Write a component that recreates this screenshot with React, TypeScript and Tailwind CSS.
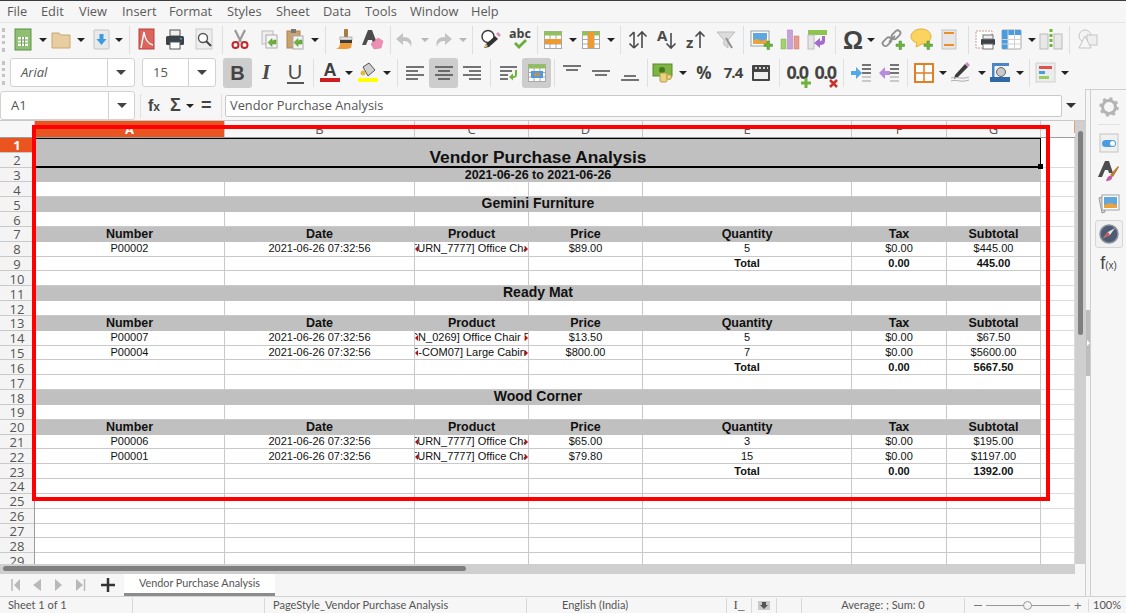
import type { ReactNode } from "react";

const UI = "font-['Open_Sans',sans-serif]";
const SHEET = "font-['Liberation_Sans',Arial,sans-serif]";

// ========================================
// Toolbar pieces
// ========================================

function B({ ml, children }: { ml: string; children: ReactNode }) {
  return <div className={`${ml} flex h-5 w-5 flex-none items-center justify-center`}>{children}</div>;
}

function Drop({ ml, light }: { ml: string; light?: boolean }) {
  return (
    <div className={`${ml} flex w-2 flex-none justify-center`}>
      <div className={`h-0 w-0 border-x-[4px] border-t-[4px] border-x-transparent ${light ? "border-t-[#b5b5b5]" : "border-t-[#222222]"}`} />
    </div>
  );
}

function Sep({ ml }: { ml: string }) {
  return <div className={`${ml} h-7 w-px flex-none bg-[#dfdfdf]`} />;
}

function Grip() {
  return <div className="ml-[2px] h-[24px] w-[3px] flex-none border-l-[3px] border-dotted border-[#c4c4c4]" />;
}

function Ico({ children }: { children: ReactNode }) {
  return (
    <svg width="20" height="20" viewBox="0 0 20 20" className="flex-none overflow-visible">
      {children}
    </svg>
  );
}

const Plus = () => <path d="M13 14h3v-3h2.500v3h3v2.500h-3v3H16v-3h-3z" fill="#6db33f" stroke="#4f8f2d" strokeWidth=".5" />;
const GreenArrow = () => <path d="M17 10v4h-4v2.500l-4-4 4-4V11h1.500V10z" fill="#6fb33c" stroke="#4c8a28" strokeWidth=".5" />;

const TableGrid = ({ head = "#8cc44f" }: { head?: string }) => (
  <>
    <rect x="1.500" y="1.500" width="17" height="17" fill="#fff" stroke="#a8a8a8" />
    <rect x="1.500" y="1.500" width="17" height="4" fill={head} />
    <path d="M1.500 9.500h17M1.500 14h17M7 1.500v17M13 1.500v17" stroke="#a8a8a8" fill="none" />
  </>
);

const Lines = ({ d }: { d: string }) => <path d={d} stroke="#4a4a4a" strokeWidth="1.600" fill="none" />;

const icons: Record<string, ReactNode> = {
  newSheet: (
    <>
      <rect x="2" y="-1" width="16" height="21" fill="#8fbf73" stroke="#5d9148" />
      <rect x="5" y="7" width="10" height="9" fill="#fff" />
      <path d="M5 10h10M5 13h10M8.500 7v9M11.500 7v9" stroke="#6ea653" fill="none" />
    </>
  ),
  folder: <path d="M1 3h7l2 2h9v13H1z" fill="#e7cd9f" stroke="#c8a873" />,
  save: (
    <>
      <rect x="3" y="0" width="15" height="19" rx="1" fill="#e9e9e9" stroke="#c3c3c3" />
      <path d="M8.500 4h4v5h3l-5 6-5-6h3z" fill="#3d9be0" />
    </>
  ),
  pdf: (
    <>
      <rect x="3" y="-1" width="15" height="20" fill="#d9655d" stroke="#b8433d" />
      <path d="M5 18 8 2c1 7 4 12 9 13" stroke="#fff" strokeWidth="1.400" fill="none" />
    </>
  ),
  print: (
    <>
      <rect x="5" y="0" width="10" height="6" fill="#eee" stroke="#555" />
      <rect x="1" y="6" width="18" height="9" rx="1.500" fill="#3b4248" />
      <rect x="5" y="12" width="10" height="7" fill="#fff" stroke="#555" />
      <rect x="15" y="8" width="2" height="1.500" fill="#35a5e0" />
    </>
  ),
  preview: (
    <>
      <rect x="2" y="-1" width="16" height="20" fill="#eeeeee" stroke="#c9c9c9" />
      <circle cx="9" cy="8" r="4.500" fill="#fff" stroke="#555" strokeWidth="1.400" />
      <path d="m12 11 5 5" stroke="#444" strokeWidth="2" />
    </>
  ),
  cut: (
    <>
      <path d="M5 0l6 12M15 0 9 12" stroke="#9a9a9a" strokeWidth="2.200" />
      <circle cx="5.500" cy="15" r="3" fill="none" stroke="#c1272d" strokeWidth="2" />
      <circle cx="14.500" cy="15" r="3" fill="none" stroke="#c1272d" strokeWidth="2" />
    </>
  ),
  copy: (
    <>
      <rect x="3" y="1" width="11" height="13" fill="#eee" stroke="#bbb" />
      <rect x="7" y="5" width="11" height="13" fill="#f6f6f6" stroke="#aaa" />
      <GreenArrow />
    </>
  ),
  paste: (
    <>
      <rect x="2" y="1" width="13" height="17" fill="#c8a36f" stroke="#a98450" />
      <rect x="6" y="-1" width="5" height="4" fill="#777" />
      <rect x="8" y="6" width="10" height="13" fill="#f4f4f4" stroke="#aaa" />
      <GreenArrow />
    </>
  ),
  clone: (
    <>
      <rect x="10" y="-1" width="4" height="8" rx="1" fill="#a87a3f" />
      <rect x="6" y="7" width="12" height="3" fill="#e4e4e4" stroke="#777" strokeWidth=".5" />
      <rect x="6" y="10" width="12" height="3" fill="#3d3d3d" />
      <path d="M6 13h12l-1 5-4 1H2c3-1 4-3 4-6z" fill="#ee9b3a" />
    </>
  ),
  clear: (
    <>
      <path d="M0 15 6 0h4l5 13h-4l-1-3H6l-2 5z" fill="#4d4d4d" />
      <path d="M9 14 16 8l5 3-2 7-7 1z" fill="#ee8fb3" stroke="#d66d96" strokeWidth=".5" />
    </>
  ),
  undo: <path d="M8 3 1 9l7 6v-4c4 0 7 1 8 6 2-7-2-10-8-10z" fill="#c3c3c3" />,
  redo: <path d="m12 3 7 6-7 6v-4c-4 0-7 1-8 6-2-7 2-10 8-10z" fill="#c3c3c3" />,
  find: (
    <>
      <circle cx="7" cy="6.500" r="6" fill="#fff" stroke="#3f3f3f" strokeWidth="1.500" />
      <path d="m3 18 2-4 9-8 3 3-9 8z" fill="#333" />
      <path d="m15 4 3 3 2-2-3-3z" fill="#e58fb4" />
      <path d="m3 18 2-4 2 2z" fill="#e8c86a" />
    </>
  ),
  spell: (
    <>
      <text x="10" y="8" textAnchor="middle" fontSize="12.500" fontWeight="700" fill="#444" fontFamily="Open Sans">abc</text>
      <path d="m5 13 4 4 7-7" stroke="#69ae3a" strokeWidth="2.800" fill="none" />
    </>
  ),
  rows: (
    <>
      <TableGrid />
      <rect x="2" y="9" width="16" height="5" fill="#ef9a2e" />
    </>
  ),
  cols: (
    <>
      <TableGrid />
      <rect x="7" y="2" width="6" height="16" fill="#ef9a2e" />
    </>
  ),
  sort: <Lines d="M6 18V2M1.500 6.500 6 2M6 18l-4.500-4.500M6 18l4.500-4.500M14 2v16M9.500 6.500 14 2l4.500 4.500" />,
  asc: (
    <>
      <text x="-1" y="11" fontSize="15" fontWeight="700" fill="#4a4a4a" fontFamily="Open Sans">A</text>
      <Lines d="M13 3v15M8.500 13.500l4.500 4.500 4.500-4.500" />
    </>
  ),
  desc: (
    <>
      <text x="-1" y="18" fontSize="15" fontWeight="700" fill="#4a4a4a" fontFamily="Open Sans">z</text>
      <Lines d="M13 18V2M8.500 6.500 13 2l4.500 4.500" />
    </>
  ),
  filter: (
    <>
      <path d="M1 2h18l-7 8v8l-4-3v-5z" fill="#dcdcdc" stroke="#bdbdbd" />
      <path d="m10 8 6 10" stroke="#8f8f8f" strokeWidth="2" />
    </>
  ),
  image: (
    <>
      <rect x="0" y="1" width="18" height="15" fill="#fff" stroke="#9aa0a6" />
      <rect x="2" y="3" width="14" height="11" fill="#5fa8dd" />
      <path d="M2 14v-4l4-1 4 2 6-2v5z" fill="#eea23a" />
      <Plus />
    </>
  ),
  chart: (
    <>
      <rect x="1" y="9" width="5" height="10" fill="#a3d16b" stroke="#7fb04b" strokeWidth=".5" />
      <rect x="7.500" y="0" width="5" height="19" fill="#c8a1dc" stroke="#a67dbd" strokeWidth=".5" />
      <rect x="14" y="6" width="5" height="13" fill="#e79c90" stroke="#c97768" strokeWidth=".5" />
    </>
  ),
  pivot: (
    <>
      <rect x="0" y="0" width="19" height="5" fill="#8cc44f" />
      <rect x="0" y="5" width="6" height="14" fill="#e5e5e5" stroke="#bbb" />
      <path d="M17 6v5c0 3-2 4-5 4v3l-6-5 6-5v3c1 0 2 0 2-2V6z" fill="#a56ccf" />
    </>
  ),
  link: (
    <>
      <rect x="-1" y="9" width="10" height="5.500" rx="2.700" transform="rotate(-45 4 11.700)" fill="none" stroke="#8f8f8f" strokeWidth="1.800" />
      <rect x="8" y="2" width="10" height="5.500" rx="2.700" transform="rotate(-45 13 4.700)" fill="none" stroke="#8f8f8f" strokeWidth="1.800" />
      <path d="m6 12 6-6" stroke="#8f8f8f" strokeWidth="1.800" />
      <Plus />
    </>
  ),
  comment: (
    <>
      <path d="M10 -1c6 0 10 3 10 7.500S16 14 11 14l-6 3 1-4c-3-1-6-3-6-6.500S4-1 10-1z" fill="#fbd45f" stroke="#e0b03c" />
      <Plus />
    </>
  ),
  header: (
    <>
      <rect x="3" y="0" width="14" height="19" fill="#e6e6e6" stroke="#c4c4c4" />
      <rect x="5" y="2" width="10" height="2" fill="#ee8c25" />
      <rect x="5" y="14" width="10" height="2" fill="#ee8c25" />
    </>
  ),
  printArea: (
    <>
      <rect x="0" y="1" width="16" height="17" fill="#fff" stroke="#c79a9a" strokeDasharray="2 1" />
      <rect x="5" y="9" width="14" height="6" rx="1" fill="#3b4248" />
      <rect x="7" y="5" width="10" height="4" fill="#eee" stroke="#777" />
      <rect x="7" y="14" width="10" height="5" fill="#fff" stroke="#777" />
    </>
  ),
  freeze: (
    <>
      <rect x="0" y="0" width="19" height="19" rx="1" fill="#fff" stroke="#a8a8a8" />
      <rect x="0" y="0" width="19" height="5" fill="#4a9ce0" />
      <rect x="0" y="0" width="6" height="19" fill="#4a9ce0" />
      <path d="M0 9.500h19M0 14h19M6 0v19M12.500 0v19" stroke="#cfcfcf" fill="none" />
    </>
  ),
  split: (
    <>
      <rect x="-1" y="4" width="8" height="15" fill="#e8e8e8" stroke="#bbb" />
      <rect x="13" y="4" width="8" height="15" fill="#e8e8e8" stroke="#bbb" />
      <path d="M10 -1v20" stroke="#6fb33c" strokeWidth="3" strokeDasharray="3 2" />
    </>
  ),
  shapes: (
    <>
      <circle cx="7" cy="6" r="6" fill="#f4f4f4" stroke="#c4c4c4" />
      <rect x="9" y="5" width="10" height="10" fill="#efefef" stroke="#c4c4c4" />
      <path d="m7 6 6 12H1z" fill="#f7f7f7" stroke="#c4c4c4" />
    </>
  ),
  fontColor: (
    <>
      <text x="10" y="13" textAnchor="middle" fontSize="18" fontWeight="700" fill="#3f3f3f" fontFamily="Liberation Sans">A</text>
      <rect x="0" y="15" width="20" height="4" fill="#cc1f1f" />
    </>
  ),
  bgColor: (
    <>
      <path d="M5 4 11 0l6 7-7 6z" fill="#cfcfcf" stroke="#555" />
      <circle cx="5" cy="10" r="2.500" fill="#e5b93a" />
      <rect x="0" y="15" width="20" height="4" fill="#ffff00" />
    </>
  ),
  alignL: <Lines d="M1 4h18M1 8h12M1 12h18M1 16h12" />,
  alignC: <Lines d="M1 4h18M4 8h12M1 12h18M4 16h12" />,
  alignR: <Lines d="M1 4h18M7 8h12M1 12h18M7 16h12" />,
  wrap: (
    <>
      <Lines d="M1 4h17M1 8h12M1 12h8M1 16h8" />
      <path d="M18 7v5c0 2-2 3-4 3v2.500l-4-3.500 4-3.500V13c1 0 2 0 2-1V7z" fill="#6fb33c" />
    </>
  ),
  merge: (
    <>
      <TableGrid />
      <rect x="4" y="8" width="12" height="7" fill="#4a9ce0" />
      <path d="M9.500 9 6.500 11.500 9.500 14zM10.500 9l3 2.500-3 2.500z" fill="#ee8c25" />
    </>
  ),
  top: <Lines d="M1 3h18M4 7h12" />,
  mid: <Lines d="M1 8h18M4 12h12" />,
  bot: <Lines d="M4 13h12M1 17h18" />,
  currency: (
    <>
      <rect x="0" y="1" width="19" height="12" fill="#7fb342" stroke="#5a8c2b" />
      <circle cx="9" cy="7" r="3" fill="#3f7a1e" />
      <rect x="7" y="10" width="7" height="9" rx="1.500" fill="#ead182" stroke="#b99c45" />
      <circle cx="16" cy="14" r="2.500" fill="#ead182" stroke="#b99c45" />
    </>
  ),
  date: (
    <>
      <rect x="1" y="2" width="18" height="16" rx="1" fill="#444" />
      <rect x="3" y="9" width="14" height="7" fill="#eee" />
      <path d="M4 5h2M8 5h2M12 5h2M16 5h1" stroke="#fff" strokeWidth="1.500" />
    </>
  ),
  indentAdd: (
    <>
      <path d="M0 8h5V4l6 6-6 6v-4H0z" fill="#52a9e6" />
      <Lines d="M11 2h9M11 6h9M11 10h9" />
      <path d="M11 14h9M11 18h9" stroke="#bbb" strokeWidth="1.400" />
    </>
  ),
  indentDel: (
    <>
      <path d="M11 8H6V4l-6 6 6 6v-4h5z" fill="#b88ae0" />
      <Lines d="M11 2h9M11 6h9M11 10h9" />
      <path d="M11 14h9M11 18h9" stroke="#bbb" strokeWidth="1.400" />
    </>
  ),
  borders: (
    <>
      <rect x="1" y="1" width="18" height="18" fill="#fff" stroke="#e07f24" strokeWidth="2" />
      <path d="M10 1v18M1 10h18" stroke="#e07f24" strokeWidth="1.500" />
    </>
  ),
  lineStyle: (
    <>
      <path d="M4 12 14 1l3 3-10 10-4 2z" fill="#3b3b3b" />
      <path d="m14 1 2-2 3 3-2 2z" fill="#cf8ac7" />
      <path d="M0 15c6-2 10 2 18-1M0 18c6-2 10 2 18-1" stroke="#aaa" fill="none" />
    </>
  ),
  borderColor: (
    <>
      <rect x="0" y="14" width="20" height="5" fill="#2f69a8" />
      <rect x="2" y="0" width="2.500" height="14" fill="#4b86c4" />
      <rect x="2" y="0" width="17" height="3" fill="#4b86c4" />
      <circle cx="11" cy="9" r="4.500" fill="#c9c9c9" stroke="#666" />
    </>
  ),
  cond: (
    <>
      <rect x="0" y="0" width="19" height="19" fill="#ececec" stroke="#cfcfcf" />
      <rect x="3" y="3" width="13" height="3" fill="#e0524d" />
      <rect x="3" y="8" width="6" height="3" fill="#4a9ce0" />
      <rect x="3" y="13" width="10" height="3" fill="#99cc66" />
    </>
  ),
  gear: (
    <>
      <circle cx="10" cy="10" r="6.500" fill="none" stroke="#b4b4b4" strokeWidth="3" />
      <circle cx="10" cy="10" r="8.500" fill="none" stroke="#b4b4b4" strokeWidth="2.500" strokeDasharray="3 3.700" />
    </>
  ),
  toggle: (
    <>
      <rect x="1" y="1" width="18" height="18" fill="#f0f0f0" stroke="#c4c4c4" />
      <rect x="3" y="7" width="14" height="7" rx="3.500" fill="#4a9ce0" />
      <circle cx="13.500" cy="10.500" r="2.500" fill="#fff" />
    </>
  ),
  style: (
    <>
      <path d="M-1 15 6-1h4l4 12h-4l-1-3H6l-3 7z" fill="#4d4d4d" />
      <path d="M11 13 19 4l1 1-6 10z" fill="#b97a2c" />
      <path d="M7 19c1-4 3-6 6-5 1 3-2 5-6 5z" fill="#c75aa8" />
    </>
  ),
  gallery: (
    <>
      <path d="m0 4 3-1 3 15-3 1z" fill="#d6d6d6" stroke="#999" />
      <rect x="3" y="1" width="17" height="15" fill="#fff" stroke="#9aa0a6" />
      <rect x="5" y="3" width="13" height="11" fill="#5fa8dd" />
      <path d="M5 14v-3l6-2 7 2v3z" fill="#eea23a" />
    </>
  ),
  compass: (
    <>
      <circle cx="10" cy="10" r="9" fill="#4c5a73" stroke="#8a8f99" strokeWidth="1.500" />
      <path d="M16 4 11 11l-7 3 5-6z" fill="#e6e6e6" />
      <path d="m11 11-2-3-5 6z" fill="#d5534f" />
    </>
  ),
};

const Icon = ({ n }: { n: string }) => <Ico>{icons[n]}</Ico>;

function ToolbarOne() {
  return (
    <div className="flex h-[33px] items-center">
      <Grip />
      <B ml="ml-[8px]"><Icon n="newSheet" /></B>
      <Drop ml="ml-[6px]" />
      <B ml="ml-[4px]"><Icon n="folder" /></B>
      <Drop ml="ml-[6px]" />
      <B ml="ml-[6px]"><Icon n="save" /></B>
      <Drop ml="ml-[4px]" />
      <Sep ml="ml-[6px]" />
      <B ml="ml-[6px]"><Icon n="pdf" /></B>
      <B ml="ml-[9px]"><Icon n="print" /></B>
      <B ml="ml-[9px]"><Icon n="preview" /></B>
      <Sep ml="ml-[8px]" />
      <B ml="ml-[7px]"><Icon n="cut" /></B>
      <B ml="ml-[9px]"><Icon n="copy" /></B>
      <B ml="ml-[6px]"><Icon n="paste" /></B>
      <Drop ml="ml-[6px]" />
      <Sep ml="ml-[6px]" />
      <B ml="ml-[8px]"><Icon n="clone" /></B>
      <B ml="ml-[8px]"><Icon n="clear" /></B>
      <Sep ml="ml-[8px]" />
      <B ml="ml-[4px]"><Icon n="undo" /></B>
      <Drop ml="ml-[6px]" light />
      <B ml="ml-[4px]"><Icon n="redo" /></B>
      <Drop ml="ml-[6px]" light />
      <Sep ml="ml-[5px]" />
      <B ml="ml-[8px]"><Icon n="find" /></B>
      <B ml="ml-[9px]"><Icon n="spell" /></B>
      <Sep ml="ml-[7px]" />
      <B ml="ml-[5px]"><Icon n="rows" /></B>
      <Drop ml="ml-[6px]" />
      <B ml="ml-[4px]"><Icon n="cols" /></B>
      <Drop ml="ml-[6px]" />
      <Sep ml="ml-[5px]" />
      <B ml="ml-[7px]"><Icon n="sort" /></B>
      <B ml="ml-[10px]"><Icon n="asc" /></B>
      <B ml="ml-[9px]"><Icon n="desc" /></B>
      <B ml="ml-[9px]"><Icon n="filter" /></B>
      <Sep ml="ml-[7px]" />
      <B ml="ml-[7px]"><Icon n="image" /></B>
      <B ml="ml-[9px]"><Icon n="chart" /></B>
      <B ml="ml-[8px]"><Icon n="pivot" /></B>
      <Sep ml="ml-[7px]" />
      <B ml="ml-[7px]">
        <span className="font-['Liberation_Sans',sans-serif] text-[25px] font-bold leading-5 text-[#444444]">Ω</span>
      </B>
      <Drop ml="ml-[4px]" />
      <B ml="ml-[8px]"><Icon n="link" /></B>
      <B ml="ml-[8px]"><Icon n="comment" /></B>
      <B ml="ml-[8px]"><Icon n="header" /></B>
      <Sep ml="ml-[9px]" />
      <B ml="ml-[7px]"><Icon n="printArea" /></B>
      <B ml="ml-[6px]"><Icon n="freeze" /></B>
      <Drop ml="ml-[6px]" />
      <B ml="ml-[5px]"><Icon n="split" /></B>
      <Sep ml="ml-[8px]" />
      <B ml="ml-[8px]"><Icon n="shapes" /></B>
    </div>
  );
}

function Active({ ml, children }: { ml: string; children: ReactNode }) {
  return (
    <div className={`${ml} flex h-[30px] w-[29px] flex-none items-center justify-center rounded-[3px] bg-[#cdcdcd]`}>
      {children}
    </div>
  );
}

function Combo({ text, width, field, italic }: { text: string; width: string; field: string; italic?: boolean }) {
  return (
    <div className={`${width} flex h-[29px] flex-none items-center rounded-[3px] border border-[#d2d2d2] bg-white`}>
      <div className={`${field} flex-none truncate pl-[10px] text-[13px] text-[#555555] ${italic ? "italic" : ""}`}>{text}</div>
      <div className="flex h-full flex-1 items-center justify-center border-l border-[#d2d2d2]">
        <div className="h-0 w-0 border-x-[5px] border-t-[5px] border-x-transparent border-t-[#444444]" />
      </div>
    </div>
  );
}

function ZeroZero({ children }: { children: ReactNode }) {
  return (
    <div className="relative">
      <span className="font-['Open_Sans',sans-serif] text-[18px] font-bold leading-5 tracking-[-1.5px] text-[#444444]">0.0</span>
      {children}
    </div>
  );
}

function ToolbarTwo() {
  return (
    <div className="flex h-[33px] items-center">
      <Grip />
      <div className="ml-[5px]">
        <Combo text="Arial" width="w-[125px]" field="w-[96px]" italic />
      </div>
      <div className="ml-[7px]">
        <Combo text="15" width="w-[74px]" field="w-[45px]" />
      </div>
      <Active ml="ml-[7px]">
        <span className="font-['Liberation_Sans',sans-serif] text-[20px] font-bold text-[#444444]">B</span>
      </Active>
      <B ml="ml-[4px]">
        <span className="font-['Liberation_Serif',serif] text-[21px] font-bold italic text-[#4a4a4a]">I</span>
      </B>
      <B ml="ml-[9px]">
        <span className="w-[17px] border-b-2 border-[#555555] text-center font-['Liberation_Sans',sans-serif] text-[20px] leading-[20px] text-[#4a4a4a]">U</span>
      </B>
      <Sep ml="ml-[8px]" />
      <B ml="ml-[6px]"><Icon n="fontColor" /></B>
      <Drop ml="ml-[5px]" />
      <B ml="ml-[5px]"><Icon n="bgColor" /></B>
      <Drop ml="ml-[5px]" />
      <Sep ml="ml-[6px]" />
      <B ml="ml-[7px]"><Icon n="alignL" /></B>
      <Active ml="ml-[4px]"><Icon n="alignC" /></Active>
      <B ml="ml-[4px]"><Icon n="alignR" /></B>
      <Sep ml="ml-[8px]" />
      <B ml="ml-[8px]"><Icon n="wrap" /></B>
      <Active ml="ml-[3px]"><Icon n="merge" /></Active>
      <Sep ml="ml-[3px]" />
      <B ml="ml-[7px]"><Icon n="top" /></B>
      <B ml="ml-[9px]"><Icon n="mid" /></B>
      <B ml="ml-[9px]"><Icon n="bot" /></B>
      <Sep ml="ml-[7px]" />
      <B ml="ml-[5px]"><Icon n="currency" /></B>
      <Drop ml="ml-[6px]" />
      <B ml="ml-[7px]">
        <span className="font-['Open_Sans',sans-serif] text-[17px] font-bold text-[#444444]">%</span>
      </B>
      <B ml="ml-[9px]">
        <span className="font-['Open_Sans',sans-serif] text-[15px] font-bold tracking-[-1px] text-[#444444]">7.4</span>
      </B>
      <B ml="ml-[8px]"><Icon n="date" /></B>
      <Sep ml="ml-[8px]" />
      <B ml="ml-[7px]">
        <ZeroZero>
          <svg width="10" height="10" viewBox="0 0 10 10" className="absolute -bottom-[3px] -right-[3px]">
            <path d="M3.500 0h3v3.500H10v3H6.500V10h-3V6.500H0v-3h3.500z" fill="#6db33f" />
          </svg>
        </ZeroZero>
      </B>
      <B ml="ml-[8px]">
        <ZeroZero>
          <svg width="9" height="9" viewBox="0 0 9 9" className="absolute -bottom-[3px] -right-[2px]">
            <path d="m1 1 7 7M8 1 1 8" stroke="#c8322d" strokeWidth="2.500" />
          </svg>
        </ZeroZero>
      </B>
      <Sep ml="ml-[8px]" />
      <B ml="ml-[7px]"><Icon n="indentAdd" /></B>
      <B ml="ml-[8px]"><Icon n="indentDel" /></B>
      <Sep ml="ml-[8px]" />
      <B ml="ml-[6px]"><Icon n="borders" /></B>
      <Drop ml="ml-[5px]" />
      <B ml="ml-[4px]"><Icon n="lineStyle" /></B>
      <Drop ml="ml-[7px]" />
      <B ml="ml-[4px]"><Icon n="borderColor" /></B>
      <Drop ml="ml-[6px]" />
      <Sep ml="ml-[5px]" />
      <B ml="ml-[6px]"><Icon n="cond" /></B>
      <Drop ml="ml-[5px]" />
    </div>
  );
}

function FormulaBar() {
  return (
    <div className="flex h-[32px] flex-none items-center border-b border-[#c9c9c9] pt-[2px]">
      <Combo text="A1" width="w-[135px]" field="w-[107px]" />
      <div className="ml-[5px] h-6 w-px bg-[#dfdfdf]" />
      <span className="ml-[7px] w-[17px] font-['Liberation_Sans',sans-serif] text-[16px] font-bold text-[#444444]">
        f<span className="text-[12px]">x</span>
      </span>
      <span className="ml-[5px] w-[14px] font-['Liberation_Sans',sans-serif] text-[18px] font-bold text-[#444444]">Σ</span>
      <Drop ml="ml-[2px]" />
      <span className="ml-[7px] w-[14px] font-['Liberation_Sans',sans-serif] text-[18px] font-bold text-[#444444]">=</span>
      <div className="ml-[6px] h-6 w-px bg-[#dfdfdf]" />
      <div className="ml-[3px] flex h-[22px] w-[837px] flex-none items-center rounded-[2px] border border-[#c9c9c9] bg-white pl-[4px] text-[12.8px] text-[#555555]">
        Vendor Purchase Analysis
      </div>
      <div className="ml-[2px] flex w-[14px] justify-center">
        <div className="h-0 w-0 border-x-[5px] border-t-[5px] border-x-transparent border-t-[#333333]" />
      </div>
    </div>
  );
}

// ========================================
// Sheet
// ========================================

const COLS = ["w-[190px]", "w-[190px]", "w-[114px]", "w-[114px]", "w-[209px]", "w-[95px]", "w-[94px]"];
const LETTERS = ["A", "B", "C", "D", "E", "F", "G"];
const ROW = "h-[14.83px]";

type Line =
  | { type: "blank" }
  | { type: "band"; text: string; size: string }
  | { type: "head" }
  | { type: "data"; cells: string[] }
  | { type: "total"; tax: string; sub: string };

const HEAD = ["Number", "Date", "Product", "Price", "Quantity", "Tax", "Subtotal"];
const blank: Line = { type: "blank" };
const GROUP_TITLE = "pb-[3px] text-[14px]";

const LINES: Line[] = [
  { type: "band", text: "2021-06-26 to 2021-06-26", size: "text-[12.5px]" },
  blank,
  { type: "band", text: "Gemini Furniture", size: GROUP_TITLE },
  blank,
  { type: "head" },
  { type: "data", cells: ["P00002", "2021-06-26 07:32:56", "[FURN_7777] Office Chair", "$89.00", "5", "$0.00", "$445.00"] },
  { type: "total", tax: "0.00", sub: "445.00" },
  blank,
  { type: "band", text: "Ready Mat", size: GROUP_TITLE },
  blank,
  { type: "head" },
  { type: "data", cells: ["P00007", "2021-06-26 07:32:56", "[FURN_0269] Office Chair Black", "$13.50", "5", "$0.00", "$67.50"] },
  { type: "data", cells: ["P00004", "2021-06-26 07:32:56", "[E-COM07] Large Cabinet", "$800.00", "7", "$0.00", "$5600.00"] },
  { type: "total", tax: "0.00", sub: "5667.50" },
  blank,
  { type: "band", text: "Wood Corner", size: GROUP_TITLE },
  blank,
  { type: "head" },
  { type: "data", cells: ["P00006", "2021-06-26 07:32:56", "[FURN_7777] Office Chair", "$65.00", "3", "$0.00", "$195.00"] },
  { type: "data", cells: ["P00001", "2021-06-26 07:32:56", "[FURN_7777] Office Chair", "$79.80", "15", "$0.00", "$1197.00"] },
  { type: "total", tax: "0.00", sub: "1392.00" },
  blank,
  blank,
  blank,
  blank,
  blank,
  blank,
];

function Cell({ col, children, bold }: { col: number; children?: ReactNode; bold?: boolean }) {
  return (
    <div className={`${COLS[col]} flex h-full flex-none items-center justify-center overflow-hidden whitespace-nowrap border-r border-b border-[#c9c9c9] text-[11px] leading-none text-[#111111] ${bold ? "font-bold" : ""}`}>
      {children}
    </div>
  );
}

function Clipped({ text }: { text: string }) {
  return (
    <div className="relative flex h-full w-[114px] flex-none items-center justify-center overflow-hidden whitespace-nowrap border-r border-b border-[#c9c9c9] text-[11px] leading-none text-[#111111]">
      <span className="flex-none">{text}</span>
      <div className="absolute left-0 top-[4px] flex h-[7px] w-[3px] items-center bg-white">
        <div className="h-0 w-0 border-y-[3px] border-r-[3px] border-y-transparent border-r-[#b01010]" />
      </div>
      <div className="absolute right-0 top-[4px] flex h-[7px] w-[3px] items-center bg-white">
        <div className="h-0 w-0 border-y-[3px] border-l-[3px] border-y-transparent border-l-[#b01010]" />
      </div>
    </div>
  );
}

const ColH = () => <div className="h-full w-[34px] flex-none border-r border-b border-[#dcdcdc]" />;

function SheetRow({ line }: { line: Line }) {
  if (line.type === "band") {
    return (
      <div className={`${ROW} flex`}>
        <div className={`${line.size} flex h-full w-[1006px] flex-none items-center justify-center bg-[#c0c0c0] font-bold leading-none text-[#111111]`}>
          {line.text}
        </div>
        <ColH />
      </div>
    );
  }
  if (line.type === "head") {
    return (
      <div className={`${ROW} flex`}>
        <div className="flex h-full w-[1006px] flex-none bg-[#c0c0c0]">
          {HEAD.map((h, i) => (
            <div key={h} className={`${COLS[i]} flex flex-none items-center justify-center pr-px text-[12.5px] font-bold leading-none text-[#111111]`}>
              {h}
            </div>
          ))}
        </div>
        <ColH />
      </div>
    );
  }
  if (line.type === "data") {
    return (
      <div className={`${ROW} flex`}>
        {line.cells.map((c, i) =>
          i === 2 ? <Clipped key={i} text={c} /> : <Cell key={i} col={i}>{c}</Cell>
        )}
        <ColH />
      </div>
    );
  }
  const total = line.type === "total";
  return (
    <div className={`${ROW} flex`}>
      {COLS.map((_, i) => (
        <Cell key={i} col={i} bold={total}>
          {total && i === 4 ? "Total" : total && i === 5 ? line.tax : total && i === 6 ? line.sub : null}
        </Cell>
      ))}
      <ColH />
    </div>
  );
}

function Sheet() {
  const numbers = Array.from({ length: 29 }, (_, i) => i + 1);
  return (
    <div className="flex w-[1075px] flex-none flex-col">
      {/* Column letters */}
      <div className="flex h-[17px] flex-none border-b border-[#9c9c9c] bg-[#f7f7f7] text-[13px] text-[#555555]">
        <div className="w-[35px] flex-none border-r border-[#c9c9c9]" />
        {LETTERS.map((l, i) => (
          <div
            key={l}
            className={`${COLS[i]} flex flex-none items-end justify-center border-r border-[#c9c9c9] leading-[15px] ${i === 0 ? "bg-[#e95420] font-bold text-white" : ""}`}
          >
            {l}
          </div>
        ))}
        <div className="relative flex-1">
          <div className="absolute right-0 top-0 h-3 w-px bg-[#e0a070]" />
        </div>
      </div>

      {/* Rows */}
      <div className="flex h-[426px] overflow-hidden bg-white">
        <div className="w-[35px] flex-none border-r border-[#9c9c9c] bg-[#f4f4f4]">
          {numbers.map((n) => (
            <div
              key={n}
              className={`${ROW} flex items-center justify-center border-b border-[#c9c9c9] pt-[2px] text-[13px] leading-none ${n === 1 ? "bg-[#e95420] font-bold text-white" : "text-[#555555]"}`}
            >
              {n}
            </div>
          ))}
        </div>
        <div className={`flex-1 ${SHEET}`}>
          <div className="flex h-[29.66px]">
            <div className="relative flex h-full w-[1006px] flex-none items-end justify-center border border-b-2 border-black bg-[#c0c0c0] text-[17.33px] font-bold leading-[18px] text-[#111111]">
              Vendor Purchase Analysis
              <div className="absolute -bottom-[3px] -right-[3px] h-[5px] w-[5px] bg-black" />
            </div>
            <ColH />
          </div>
          {LINES.map((line, i) => (
            <SheetRow key={i} line={line} />
          ))}
        </div>
      </div>
    </div>
  );
}

function VScroll() {
  return (
    <div className="w-[10px] flex-none bg-[#cfcfcf] pt-[10px]">
      <div className="mx-auto h-[204px] w-[5px] rounded-full bg-[#7f7f7f]" />
    </div>
  );
}

function TabBar() {
  return (
    <div className="flex h-[22px] flex-none items-center">
      <svg width="90" height="16" viewBox="0 0 90 16" className="ml-[11px] flex-none">
        <path d="M1 2v12" stroke="#b9b9b9" strokeWidth="1.500" />
        <path d="M9 2 3 8l6 6zM30 2l-8 6 8 6zM44 2l7 6-7 6zM65 2l7 6-7 6z" fill="#b9b9b9" />
        <path d="M73.500 2v12" stroke="#b9b9b9" strokeWidth="1.500" />
      </svg>
      <svg width="16" height="16" viewBox="0 0 16 16" className="ml-[-1px] flex-none">
        <path d="M8 1v14M1 8h14" stroke="#333333" strokeWidth="2.500" />
      </svg>
      <div className="ml-[8px] flex h-[22px] w-[151px] flex-none items-center justify-center border-b-[3px] border-[#8c8c8c] bg-white font-['Lato',sans-serif] text-[10.8px] text-[#555555]">
        Vendor Purchase Analysis
      </div>
    </div>
  );
}

function Deck() {
  return (
    <div className="flex flex-1 flex-col items-center pt-[7px]">
      <Icon n="gear" />
      <div className="mt-[7px] h-px w-[22px] bg-[#e2e2e2]" />
      <div className="mt-[8px]"><Icon n="toggle" /></div>
      <div className="mt-[9px]"><Icon n="style" /></div>
      <div className="mt-[12px]"><Icon n="gallery" /></div>
      <div className="mt-[6px] flex h-[28px] w-[28px] items-center justify-center rounded-[3px] border border-[#d6d6d6] bg-[#f1f1f1]">
        <Icon n="compass" />
      </div>
      <div className="mt-[5px] flex h-5 items-center font-['Liberation_Sans',sans-serif] text-[18px] text-[#444444]">
        f<span className="mt-[5px] text-[10px]">(x)</span>
      </div>
    </div>
  );
}

function StatusBar() {
  const seg = "flex h-[15px] flex-none items-center border-r border-[#d9d9d9]";
  return (
    <div className="flex h-[17px] flex-none items-center border-t border-[#d2d2d2] font-['Lato',sans-serif] text-[11px] text-[#555555]">
      <div className={`${seg} w-[133px] pl-[8px]`}>Sheet 1 of 1</div>
      <div className={`${seg} w-[132px]`} />
      <div className={`${seg} w-[262px] pl-[8px]`}>PageStyle_Vendor Purchase Analysis</div>
      <div className={`${seg} w-[200px] pl-[35px]`}>English (India)</div>
      <div className={`${seg} w-[25px] justify-center`}>
        <span className="font-['Liberation_Serif',serif] text-[13px]">I_</span>
      </div>
      <div className={`${seg} w-[25px] justify-center`}>
        <svg width="12" height="9" viewBox="0 0 12 9">
          <rect width="12" height="9" fill="#c9c9c9" />
          <path d="M4 1h4v3h2L6 8 2 4h2z" fill="#555555" />
        </svg>
      </div>
      <div className={`${seg} w-[25px]`} />
      <div className={`${seg} w-[163px] justify-center`}>Average: ; Sum: 0</div>
      <div className="flex w-[124px] flex-none items-center border-r border-[#d9d9d9]">
        <span className="ml-[9px] h-px w-[8px] bg-[#777777]" />
        <div className="relative ml-[4px] h-px w-[84px] bg-[#999999]">
          <div className="absolute left-[37px] top-[-4px] h-[9px] w-[9px] rounded-full border border-[#999999] bg-[#f4f4f4]" />
        </div>
        <span className="ml-[4px] font-['Liberation_Sans',sans-serif] text-[13px] leading-none text-[#777777]">+</span>
      </div>
      <div className="pl-[4px]">100%</div>
    </div>
  );
}

const MENU: [string, string][] = [
  ["File", "w-[34px]"],
  ["Edit", "w-[38px]"],
  ["View", "w-[43px]"],
  ["Insert", "w-[47px]"],
  ["Format", "w-[58px]"],
  ["Styles", "w-[49px]"],
  ["Sheet", "w-[47px]"],
  ["Data", "w-[42px]"],
  ["Tools", "w-[45px]"],
  ["Window", "w-[61px]"],
  ["Help", "w-[40px]"],
];

export default function App() {
  return (
    <div className={`relative flex h-[613px] w-[1126px] flex-col overflow-hidden bg-[#f6f6f6] ${UI}`}>
      <div className="h-px flex-none bg-[#3c3c3c]" />
      <div className="flex h-[22px] flex-none items-center border-b border-[#e6e6e6] pl-[7px] text-[12.8px] text-[#5a5a5a]">
        {MENU.map(([label, w]) => (
          <div key={label} className={`${w} flex-none`}>
            {label}
          </div>
        ))}
      </div>
      <ToolbarOne />
      <ToolbarTwo />

      <div className="flex h-[507px] flex-none">
        <div className="flex w-[1085px] flex-none flex-col">
          <FormulaBar />
          <div className="flex">
            <Sheet />
            <VScroll />
          </div>
          <div className="h-[10px] w-[1075px] flex-none bg-[#cfcfcf] pl-[3px] pt-[2px]">
            <div className="h-[5px] w-[463px] rounded-full bg-[#7f7f7f]" />
          </div>
          <TabBar />
        </div>
        <div className="flex w-[41px] flex-none border-l border-t border-[#cfcfcf]">
          <div className="flex w-[5px] flex-none items-center border-r border-[#cfcfcf]">
            <div className="flex h-[66px] w-full items-center justify-center bg-[#bdbdbd]">
              <div className="h-0 w-0 border-y-[3px] border-l-[3px] border-y-transparent border-l-white" />
            </div>
          </div>
          <Deck />
        </div>
      </div>
      <StatusBar />

      {/* Red annotation drawn over the sheet */}
      <div className="absolute left-[32px] top-[125px] h-[376px] w-[1018px] border-[4px] border-[#ff0000]" />
    </div>
  );
}
